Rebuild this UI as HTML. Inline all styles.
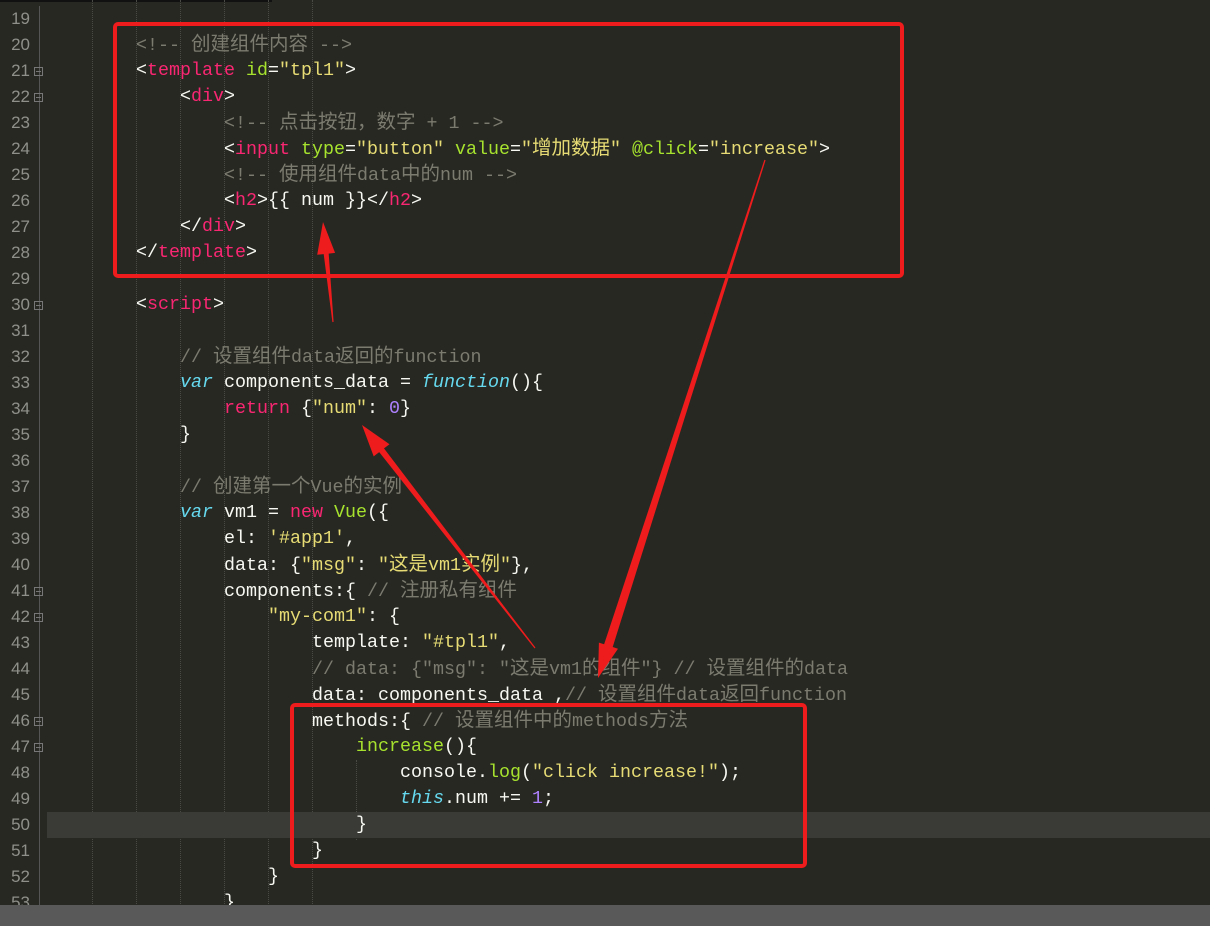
<!DOCTYPE html>
<html><head><meta charset="utf-8"><style>
body{margin:0;width:1210px;height:926px;background:#272822;overflow:hidden;position:relative;font-family:"Liberation Mono","Noto Sans CJK SC",monospace;font-size:18.33px;color:#f8f8f2}
.l{position:absolute;left:0;height:26px;line-height:26px;white-space:pre}
.n{position:absolute;left:0;width:30px;text-align:right;color:#8f908a;font-size:17px;height:26px;line-height:26px;font-family:"Liberation Sans",sans-serif}
.f{position:absolute;left:34px;width:7px;height:7px;border:1px solid #777}
.f:after{content:"";position:absolute;left:1px;right:1px;top:3px;height:1px;background:#777}
.c{color:#7c7b70}.p{color:#f92672}.g{color:#a6e22e}.y{color:#e6db74}.b{color:#66d9ef;font-style:italic}.v{color:#ae81ff}
.z{font-size:19.5px}
.gd{position:absolute;top:0;height:906px;border-left:1px dotted #4a4a44}
</style></head><body>
<div style="position:absolute;left:0;top:0;width:272px;height:2px;background:#111"></div>
<div style="position:absolute;left:39px;top:6px;width:1px;height:900px;background:#555"></div>
<div class="gd" style="left:92px"></div><div class="gd" style="left:136px"></div><div class="gd" style="left:180px"></div><div class="gd" style="left:224px"></div><div class="gd" style="left:268px"></div><div class="gd" style="left:312px"></div><div class="gd" style="left:356px;top:760px;height:80px"></div>
<div style="position:absolute;left:47px;top:812px;width:1163px;height:26px;background:#3a3a36"></div>
<div id="code"></div>
<script>
const L=[
[19,0,''],
[20,2,'<span class="c">&lt;!-- <span class="z">创建组件内容</span> --&gt;</span>'],
[21,2,'&lt;<span class="p">template</span> <span class="g">id</span>=<span class="y">"tpl1"</span>&gt;',1],
[22,3,'&lt;<span class="p">div</span>&gt;',1],
[23,4,'<span class="c">&lt;!-- <span class="z">点击按钮，数字</span> + 1 --&gt;</span>'],
[24,4,'&lt;<span class="p">input</span> <span class="g">type</span>=<span class="y">"button"</span> <span class="g">value</span>=<span class="y">"<span class="z">增加数据</span>"</span> <span class="g">@click</span>=<span class="y">"increase"</span>&gt;'],
[25,4,'<span class="c">&lt;!-- <span class="z">使用组件</span>data<span class="z">中的</span>num --&gt;</span>'],
[26,4,'&lt;<span class="p">h2</span>&gt;{{ num }}&lt;/<span class="p">h2</span>&gt;'],
[27,3,'&lt;/<span class="p">div</span>&gt;'],
[28,2,'&lt;/<span class="p">template</span>&gt;'],
[29,0,''],
[30,2,'&lt;<span class="p">script</span>&gt;',1],
[31,0,''],
[32,3,'<span class="c">// <span class="z">设置组件</span>data<span class="z">返回的</span>function</span>'],
[33,3,'<span class="b">var</span> components_data = <span class="b">function</span>(){'],
[34,4,'<span class="p">return</span> {<span class="y">"num"</span>: <span class="v">0</span>}'],
[35,3,'}'],
[36,0,''],
[37,3,'<span class="c">// <span class="z">创建第一个</span>Vue<span class="z">的实例</span></span>'],
[38,3,'<span class="b">var</span> vm1 = <span class="p">new</span> <span class="g">Vue</span>({'],
[39,4,'el: <span class="y">\'#app1\'</span>,'],
[40,4,'data: {<span class="y">"msg"</span>: <span class="y">"<span class="z">这是</span>vm1<span class="z">实例</span>"</span>},'],
[41,4,'components:{ <span class="c">// <span class="z">注册私有组件</span></span>',1],
[42,5,'<span class="y">"my-com1"</span>: {',1],
[43,6,'template: <span class="y">"#tpl1"</span>,'],
[44,6,'<span class="c">// data: {"msg": "<span class="z">这是</span>vm1<span class="z">的组件</span>"} // <span class="z">设置组件的</span>data</span>'],
[45,6,'data: components_data ,<span class="c">// <span class="z">设置组件</span>data<span class="z">返回</span>function</span>'],
[46,6,'methods:{ <span class="c">// <span class="z">设置组件中的</span>methods<span class="z">方法</span></span>',1],
[47,7,'<span class="g">increase</span>(){',1],
[48,8,'console.<span class="g">log</span>(<span class="y">"click increase!"</span>);'],
[49,8,'<span class="b">this</span>.num += <span class="v">1</span>;'],
[50,7,'}'],
[51,6,'}'],
[52,5,'}'],
[53,4,'}']];
let h='';
for(const [n,lv,t,f] of L){const top=6+(n-19)*26;
h+=`<div class="n" style="top:${top}px">${n}</div>`;
if(f)h+=`<div class="f" style="top:${top+9}px"></div>`;
h+=`<div class="l" style="top:${top}px;left:${48+lv*44}px">${t}</div>`;}
document.getElementById('code').innerHTML=h;
</script>
<div style="position:absolute;left:0;top:905px;width:1210px;height:21px;background:#595959"></div>
<div style="position:absolute;left:113px;top:22px;width:783px;height:248px;border:4px solid #ee1c1c;border-radius:5px"></div>
<div style="position:absolute;left:290px;top:703px;width:509px;height:157px;border:4px solid #ee1c1c;border-radius:5px"></div>
<svg id="ar" width="1210" height="926" style="position:absolute;left:0;top:0"></svg>
<script>
function arrow(x0,y0,x1,y1,w,hl,hw){
 const dx=x1-x0,dy=y1-y0,len=Math.hypot(dx,dy),ux=dx/len,uy=dy/len,nx=-uy,ny=ux;
 const bx=x1-ux*hl,by=y1-uy*hl;
 const p=[[x0+nx*0.6,y0+ny*0.6],[bx+nx*w/2,by+ny*w/2],[bx+nx*hw,by+ny*hw],[x1,y1],[bx-nx*hw,by-ny*hw],[bx-nx*w/2,by-ny*w/2],[x0-nx*0.6,y0-ny*0.6]];
 return `<polygon fill="#ee1c1c" points="${p.map(q=>q.map(v=>v.toFixed(1)).join(',')).join(' ')}"/>`;
}
document.getElementById('ar').innerHTML=
 arrow(333,322,323,222,5,32,9)+arrow(535,648,362,425,6,32,10)+arrow(765,160,598,678,9,34,10);
</script>
</body></html>
